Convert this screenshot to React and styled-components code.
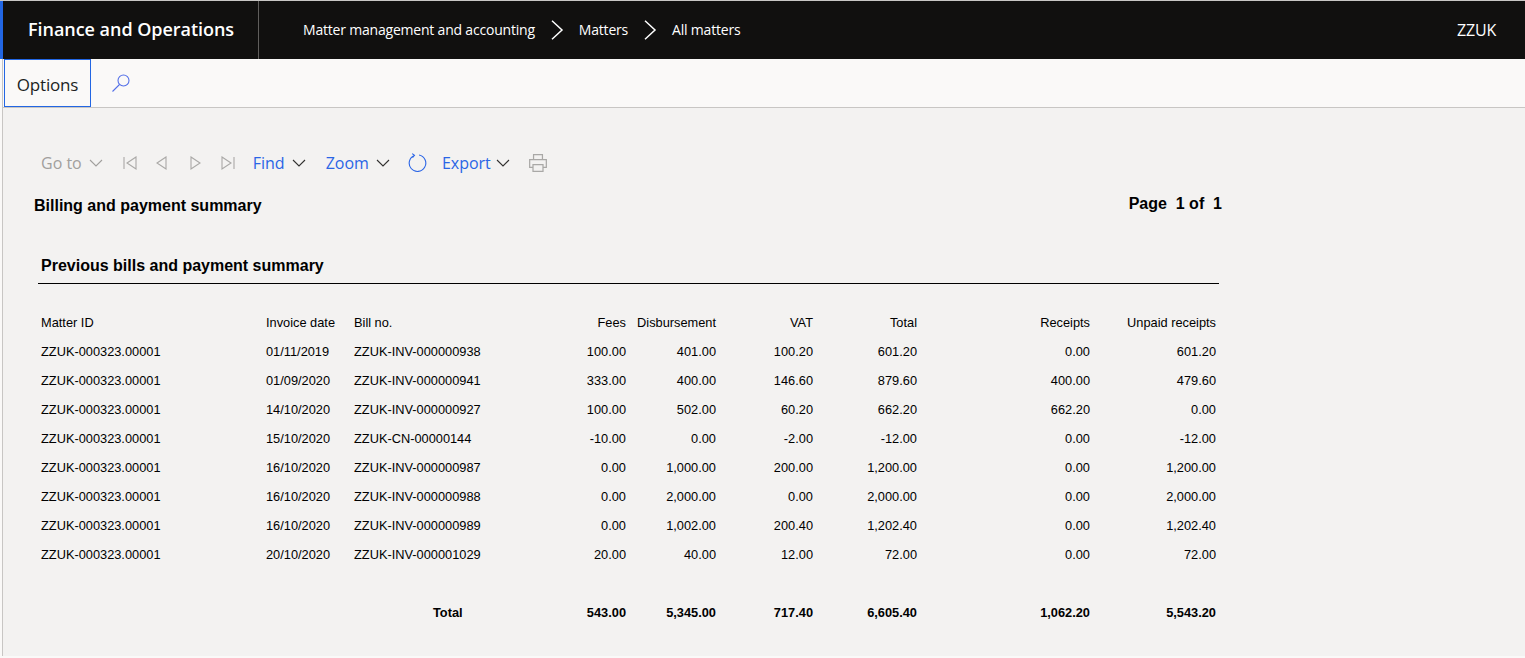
import React from 'react';
import styled, { createGlobalStyle } from 'styled-components';

const GlobalStyle = createGlobalStyle`
  html, body {
    margin: 0;
    padding: 0;
    height: 100%;
    background: #faf9f8;
    overflow: hidden;
  }
  #root {
    height: 100%;
  }
`;

const Page = styled.div`
  height: 658px;
  display: flex;
  flex-direction: column;
  padding-bottom: 2px;
  border-top: 1px solid #c8c6c4;
  box-sizing: border-box;
  font-family: "Open Sans", "Noto Sans", sans-serif;
`;

const Header = styled.header`
  height: 58px;
  flex: none;
  display: flex;
  align-items: center;
  background: #11100f;
  color: #fff;
  border-left: 3px solid #2266e3;
`;

const Brand = styled.div`
  width: 256px;
  height: 100%;
  padding: 0 0 2px 25px;
  display: flex;
  align-items: center;
  box-sizing: border-box;
  border-right: 1px solid #605e5c;
  font-size: 18px;
  font-weight: 600;
  letter-spacing: -0.04px;
  white-space: nowrap;
`;

const Crumbs = styled.nav`
  flex: 1;
  display: flex;
  align-items: center;
  padding: 0 0 1px 44px;
  font-size: 14px;
  letter-spacing: -0.2px;
`;

const CrumbArrow = styled.svg`
  width: 14px;
  height: 20px;
  margin: 0 15px;
  fill: none;
  stroke: #fff;
  stroke-width: 1.5;
`;

const Company = styled.div`
  padding-right: 29px;
  font-size: 16px;
  letter-spacing: -0.2px;
`;

const Workspace = styled.div`
  flex: 1;
  display: flex;
  flex-direction: column;
  margin-left: 2px;
  border-left: 1px solid #c8c6c4;
  background: #f3f2f1;
`;

const Ribbon = styled.div`
  height: 49px;
  flex: none;
  display: flex;
  align-items: stretch;
  background: #faf9f8;
  border-bottom: 1px solid #c8c6c4;
  box-sizing: border-box;
`;

const OptionsTab = styled.div`
  width: 87px;
  margin-left: 1px;
  padding-top: 3px;
  box-sizing: border-box;
  border: 1px solid #2266e3;
  display: flex;
  align-items: center;
  justify-content: center;
  font-size: 17px;
  letter-spacing: -0.2px;
  color: #201f1e;
`;

const RibbonSearch = styled.svg`
  width: 20px;
  height: 20px;
  margin: 14px 0 0 20px;
  fill: none;
  stroke: #5470e8;
  stroke-width: 1.1;
`;

const Content = styled.main`
  flex: 1;
  padding: 42px 0 0 31px;
`;

const Toolbar = styled.div`
  height: 26px;
  display: flex;
  align-items: center;
  padding-left: 7px;
  font-size: 16px;
`;

const ToolText = styled.span`
  color: ${(p) => (p.$disabled ? '#a19f9d' : '#2a65e6')};
  white-space: nowrap;
`;

const Chevron = styled.svg`
  flex: none;
  width: 14px;
  height: 9px;
  margin-left: ${(p) => p.$gap || 7}px;
  margin-right: ${(p) => p.$after || 0}px;
  fill: none;
  stroke: ${(p) => (p.$disabled ? '#a19f9d' : '#323130')};
  stroke-width: 1.1;
`;

const ToolIcon = styled.svg`
  flex: none;
  width: ${(p) => p.$size || 16}px;
  height: ${(p) => p.$size || 16}px;
  margin-right: ${(p) => p.$after || 0}px;
  fill: none;
  stroke: ${(p) => p.$color || '#a9a8a6'};
  stroke-width: 1.1;
`;

const Report = styled.section`
  width: 1188px;
  font-family: "Liberation Sans", Arial, sans-serif;
  color: #000;
`;

const ReportHead = styled.div`
  display: flex;
  justify-content: space-between;
  align-items: flex-start;
  height: 65px;
  margin-top: 16px;
`;

const ReportTitle = styled.h1`
  margin: 5px 0 0;
  font-size: 16px;
  line-height: 18px;
  font-weight: 700;
`;

const PageCount = styled.div`
  margin-top: 3px;
  font-size: 16px;
  line-height: 18px;
  font-weight: 700;
  white-space: pre;
`;

const SectionTitle = styled.h2`
  margin: 0 0 0 4px;
  width: 1181px;
  padding: 0 0 8px 3px;
  box-sizing: border-box;
  border-bottom: 1px solid #000;
  font-size: 16px;
  line-height: 18px;
  font-weight: 700;
`;

const Table = styled.div`
  margin: 24px 0 0 7px;
  display: grid;
  grid-template-columns: 225px 88px 192px 80px 90px 97px 104px 173px 126px;
  grid-auto-rows: 29px;
  font-size: 12.8px;
  align-items: center;
`;

const Cell = styled.div`
  text-align: ${(p) => (p.$right ? 'right' : 'left')};
  font-weight: ${(p) => (p.$bold ? 700 : 400)};
  white-space: nowrap;
`;

const Spacer = styled.div`
  grid-column: 1 / -1;
`;

const TotalLabel = styled.div`
  grid-column: 1 / 4;
  padding-left: 392px;
  font-weight: 700;
`;

const columns = ['Matter ID', 'Invoice date', 'Bill no.', 'Fees', 'Disbursement', 'VAT', 'Total', 'Receipts', 'Unpaid receipts'];

const rows = [
  ['ZZUK-000323.00001', '01/11/2019', 'ZZUK-INV-000000938', '100.00', '401.00', '100.20', '601.20', '0.00', '601.20'],
  ['ZZUK-000323.00001', '01/09/2020', 'ZZUK-INV-000000941', '333.00', '400.00', '146.60', '879.60', '400.00', '479.60'],
  ['ZZUK-000323.00001', '14/10/2020', 'ZZUK-INV-000000927', '100.00', '502.00', '60.20', '662.20', '662.20', '0.00'],
  ['ZZUK-000323.00001', '15/10/2020', 'ZZUK-CN-00000144', '-10.00', '0.00', '-2.00', '-12.00', '0.00', '-12.00'],
  ['ZZUK-000323.00001', '16/10/2020', 'ZZUK-INV-000000987', '0.00', '1,000.00', '200.00', '1,200.00', '0.00', '1,200.00'],
  ['ZZUK-000323.00001', '16/10/2020', 'ZZUK-INV-000000988', '0.00', '2,000.00', '0.00', '2,000.00', '0.00', '2,000.00'],
  ['ZZUK-000323.00001', '16/10/2020', 'ZZUK-INV-000000989', '0.00', '1,002.00', '200.40', '1,202.40', '0.00', '1,202.40'],
  ['ZZUK-000323.00001', '20/10/2020', 'ZZUK-INV-000001029', '20.00', '40.00', '12.00', '72.00', '0.00', '72.00'],
];

const totals = ['543.00', '5,345.00', '717.40', '6,605.40', '1,062.20', '5,543.20'];

function Arrow() {
  return (
    <CrumbArrow viewBox="0 0 14 20">
      <path d="M2 .8l10 9.2-10 9.2" />
    </CrumbArrow>
  );
}

function Down(props) {
  return (
    <Chevron viewBox="0 0 14 9" {...props}>
      <path d="M1 1l6 6 6-6" />
    </Chevron>
  );
}

export default function App() {
  return (
    <Page>
      <GlobalStyle />
      <Header>
        <Brand>Finance and Operations</Brand>
        <Crumbs>
          Matter management and accounting
          <Arrow />
          Matters
          <Arrow />
          All matters
        </Crumbs>
        <Company>ZZUK</Company>
      </Header>
      <Workspace>
        <Ribbon>
          <OptionsTab>Options</OptionsTab>
          <RibbonSearch viewBox="0 0 20 20">
            <circle cx="12.5" cy="7.5" r="5.5" />
            <path d="M8.5 11.5L1.5 18.5" />
          </RibbonSearch>
        </Ribbon>
        <Content>
          <Toolbar>
            <ToolText $disabled>Go to</ToolText>
            <Down $disabled $after={19} />
            <ToolIcon viewBox="0 0 16 16" $after={16}>
              <path d="M2 2v12M14 2L5 8l9 6z" />
            </ToolIcon>
            <ToolIcon viewBox="0 0 16 16" $after={17}>
              <path d="M12 2L3 8l9 6z" />
            </ToolIcon>
            <ToolIcon viewBox="0 0 16 16" $after={17}>
              <path d="M4 2l9 6-9 6z" />
            </ToolIcon>
            <ToolIcon viewBox="0 0 16 16" $after={17}>
              <path d="M2 2l9 6-9 6zM14 2v12" />
            </ToolIcon>
            <ToolText>Find</ToolText>
            <Down $after={20} />
            <ToolText>Zoom</ToolText>
            <Down $after={17} />
            <ToolIcon viewBox="0 0 20 20" $size={20} $color="#2a65e6" $after={15}>
              <path d="M7.5 2.4a8.3 8.3 0 1 0 4.6-.4M5.2.6l2.3 1.8-2 2.3" />
            </ToolIcon>
            <ToolText>Export</ToolText>
            <Down $gap={5} $after={18} />
            <ToolIcon viewBox="0 0 18 18" $size={20}>
              <path d="M5 6V1.5h8V6M4.5 13H1.5V6h15v7h-3M4.5 10.5h9v6h-9z" />
            </ToolIcon>
          </Toolbar>
          <Report>
            <ReportHead>
              <ReportTitle>Billing and payment summary</ReportTitle>
              <PageCount>Page  1 of  1</PageCount>
            </ReportHead>
            <SectionTitle>Previous bills and payment summary</SectionTitle>
            <Table>
              {columns.map((c, i) => (
                <Cell key={c} $right={i > 2}>{c}</Cell>
              ))}
              {rows.map((row, r) =>
                row.map((v, i) => (
                  <Cell key={r + '-' + i} $right={i > 2}>{v}</Cell>
                ))
              )}
              <Spacer />
              <TotalLabel>Total</TotalLabel>
              {totals.map((v) => (
                <Cell key={v} $right $bold>{v}</Cell>
              ))}
            </Table>
          </Report>
        </Content>
      </Workspace>
    </Page>
  );
}
